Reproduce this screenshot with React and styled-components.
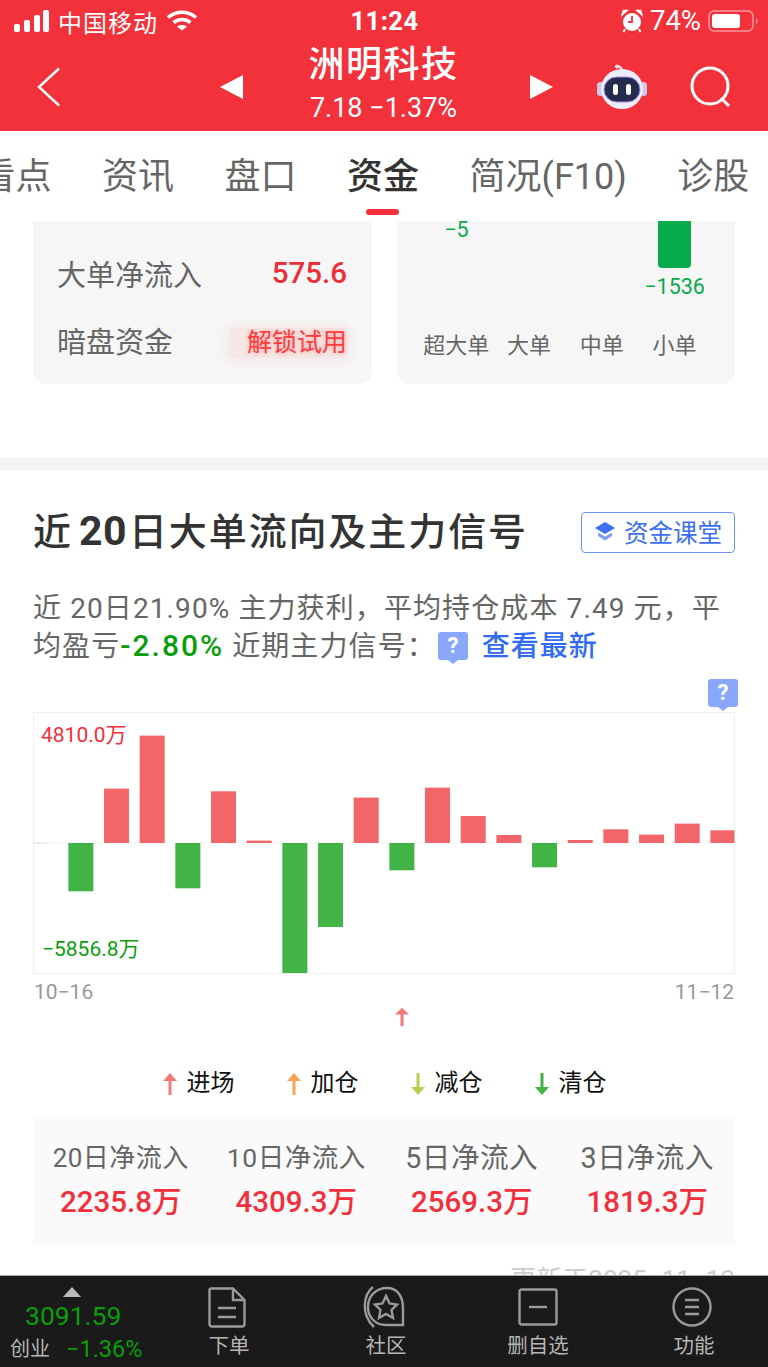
import React from "react";
import styled, { createGlobalStyle } from "styled-components";

const FONT = `Roboto, "Noto Sans CJK SC", sans-serif`;
const RED = "#f2303c";
const BAR_RED = "#f2666a";
const BAR_GREEN = "#42b445";

const Global = createGlobalStyle`
  html, body { margin: 0; padding: 0; background: #fff; }
  body { font-family: ${FONT}; }
  * { box-sizing: border-box; }
`;

const Page = styled.div`
  width: 768px;
  height: 1367px;
  display: flex;
  flex-direction: column;
  overflow: hidden;
  background: #fff;
`;

const Header = styled.header`
  height: 131px;
  background: #f2313a;
  color: #fff;
  flex: none;
`;

const StatusBar = styled.div`
  height: 42px;
  padding: 0 8px 0 14px;
  display: grid;
  grid-template-columns: 1fr auto 1fr;
  align-items: center;
  font-size: 24px;
`;

const StatusSide = styled.div`
  display: flex;
  align-items: center;
  gap: ${(p) => p.$gap || 8}px;
  justify-content: ${(p) => (p.$end ? "flex-end" : "flex-start")};
`;

const Carrier = styled.span`
  letter-spacing: 1px;
`;

const Clock = styled.span`
  margin-right: 5px;
  font-weight: 700;
  font-size: 25.5px;
  letter-spacing: 0.5px;
`;

const Battery = styled.span`
  font-size: 27.5px;
  line-height: 30px;
`;

const Nav = styled.div`
  height: 89px;
  display: grid;
  grid-template-columns: 183px 333px 1fr;
  align-items: center;
  padding: 0 36px 0 37px;
`;

const Stepper = styled.div`
  display: flex;
  align-items: center;
  justify-content: space-between;
`;

const Triangle = styled.i`
  width: 0;
  height: 0;
  border-top: 12px solid transparent;
  border-bottom: 12px solid transparent;
  border-left: ${(p) => (p.$right ? "23px solid #fff" : "0")};
  border-right: ${(p) => (p.$right ? "0" : "23px solid #fff")};
`;

const StockName = styled.div`
  display: flex;
  flex-direction: column;
  align-items: center;
  margin: -8px 6px 0 0;
`;

const StockTitle = styled.div`
  font-size: 36px;
  line-height: 46px;
  font-weight: 500;
  letter-spacing: 1.5px;
`;

const StockQuote = styled.div`
  margin-top: 4px;
  font-size: 27px;
  line-height: 32px;
  white-space: pre;
`;

const NavActions = styled.div`
  display: flex;
  justify-content: flex-end;
  align-items: center;
  gap: 42px;
`;

const Tabs = styled.nav`
  height: 90px;
  flex: none;
  display: flex;
  gap: 50.5px;
  padding-top: 25px;
  margin-left: -20.5px;
  white-space: nowrap;
`;

const Tab = styled.div`
  position: relative;
  font-size: 36px;
  line-height: 42px;
  color: ${(p) => (p.$active ? "#333" : "#666")};
  font-weight: ${(p) => (p.$active ? 500 : 400)};

  ${(p) =>
    p.$active &&
    `&::after {
      content: "";
      position: absolute;
      left: 19px;
      top: 53px;
      width: 33px;
      height: 6px;
      border-radius: 3px;
      background: #f2313a;
    }`}
`;

const Content = styled.main`
  flex: 1;
  min-height: 0;
  overflow: hidden;
`;

const CardRow = styled.div`
  margin-top: -40px;
  padding: 0 33px;
  display: grid;
  grid-template-columns: 339px 338px;
  gap: 25px;
`;

const Card = styled.div`
  height: 203px;
  background: #f6f6f6;
  border-radius: 14px;
`;

const FlowCard = styled(Card)`
  padding: 72px 25px 0 24px;
  display: flex;
  flex-direction: column;
  gap: 27px;
`;

const FlowRow = styled.div`
  display: flex;
  justify-content: space-between;
  align-items: center;
  height: 40px;
  font-size: 29px;
  color: #666;
`;

const FlowValue = styled.span`
  font-size: 29.5px;
  font-weight: 500;
  color: #ee2f3a;
`;

const LockedValue = styled.span`
  margin-top: 5px;
  font-size: 25px;
  line-height: 30px;
  padding-left: 17px;
  color: #ff3b3b;
  background: rgba(255, 70, 70, 0.08);
  box-shadow: 0 0 10px 3px rgba(255, 70, 70, 0.08);
  text-shadow: 0 0 5px rgba(255, 60, 60, 0.4);
`;

const BarCard = styled(Card)`
  padding: 0 24px 0 23px;
  display: grid;
  grid-template-columns: repeat(4, 1fr);
`;

const BarColumn = styled.div`
  display: flex;
  flex-direction: column;
  align-items: center;
`;

const BarPlot = styled.div`
  height: 150px;
  display: flex;
  flex-direction: column;
  align-items: center;
`;

const VolumeBar = styled.div`
  width: 33px;
  height: ${(p) => p.$height}px;
  background: ${(p) => (p.$ghost ? "transparent" : "#08ab4c")};
  border-radius: 0 0 4px 4px;
`;

const VolumeValue = styled.div`
  font-size: 21.5px;
  line-height: 38px;
  color: #08ab4c;
`;

const BarLabel = styled.div`
  font-size: 22px;
  line-height: 30px;
  color: #666;
  white-space: nowrap;
`;

const Divider = styled.div`
  height: 12px;
  margin-top: 74px;
  background: #f5f5f5;
`;

const Section = styled.section`
  padding: 42px 33px 0;
`;

const SectionHead = styled.div`
  display: flex;
  justify-content: space-between;
  align-items: center;
`;

const SectionTitle = styled.h2`
  margin: 0;
  padding-bottom: 2px;
  font-size: 38px;
  line-height: 38px;
  font-weight: 500;
  color: #333;
  letter-spacing: 1.9px;

  b {
    margin: 0 2px 0 6px;
    font-size: 41px;
    font-weight: 700;
    letter-spacing: 0.5px;
  }
`;

const ClassButton = styled.div`
  width: 154px;
  height: 41px;
  padding-bottom: 3px;
  border: 1.5px solid #6a91f4;
  border-radius: 4px;
  display: flex;
  align-items: center;
  justify-content: center;
  gap: 8px;
  font-size: 24.5px;
  color: #3d6ff0;
`;

const Summary = styled.p`
  margin: 38px 0 0;
  font-size: 28px;
  line-height: 36.5px;
  color: #666;
  letter-spacing: 1.1px;
  white-space: nowrap;
`;

const Loss = styled.span`
  font-size: 30px;
  font-weight: 500;
  letter-spacing: 2px;
  color: #0a9e0a;
`;

const Link = styled.span`
  color: #2f6bf5;
  font-weight: 500;
  margin-left: 14px;
  letter-spacing: 1px;
`;

const Badge = styled.span`
  position: relative;
  display: inline-flex;
  align-items: center;
  justify-content: center;
  width: 30px;
  height: 28px;
  margin-left: 2px;
  vertical-align: 3px;
  border-radius: 3px;
  background: #8aa8fb;
  color: #fff;
  font-size: 22px;
  line-height: 1;
  font-weight: 700;
  letter-spacing: 0;

  &::after {
    content: "";
    position: absolute;
    left: 50%;
    bottom: -4px;
    margin-left: -5px;
    border-left: 5px solid transparent;
    border-right: 5px solid transparent;
    border-top: 4px solid #8aa8fb;
  }
`;

const BadgeRow = styled.div`
  margin: 14px -3px 0 0;
  height: 33px;
  display: flex;
  justify-content: flex-end;

  ${Badge} {
    margin: 0;
  }
`;

const ChartBox = styled.div`
  position: relative;
  height: 262px;

  svg {
    display: block;
  }
`;

const ChartCaption = styled.span`
  position: absolute;
  left: ${(p) => p.$left}px;
  top: ${(p) => p.$top}px;
  font-size: 21px;
  line-height: 26px;
  color: ${(p) => p.$color};
`;

const DateRow = styled.div`
  display: flex;
  justify-content: space-between;
  margin-top: 6px;
  padding: 0 1px;
  font-size: 21px;
  line-height: 24px;
  color: #999;
`;

const SignalRow = styled.div`
  margin-top: 3px;
  height: 28px;
  padding-left: 361px;

  svg {
    display: block;
  }
`;

const Legend = styled.div`
  margin-top: 33px;
  height: 30px;
  display: flex;
  justify-content: center;
  gap: 51px;
`;

const LegendItem = styled.div`
  display: flex;
  align-items: center;
  gap: 9px;
  height: 30px;
  font-size: 24px;
  line-height: 24px;
  color: #111;

  svg {
    display: block;
    margin-top: 2px;
  }
`;

const StatsBox = styled.div`
  margin-top: 19px;
  height: 128px;
  background: #fafafa;
  display: grid;
  grid-template-columns: repeat(4, 1fr);
  padding-top: 23px;
`;

const Stat = styled.div`
  text-align: center;
`;

const StatLabel = styled.div`
  font-size: ${(p) => p.$size}px;
  line-height: 36px;
  color: #666;
  letter-spacing: 0.5px;
  white-space: nowrap;
`;

const StatValue = styled.div`
  margin-top: 7px;
  font-size: 29.5px;
  font-weight: 500;
  line-height: 38px;
  color: ${RED};
  white-space: nowrap;
`;

const UpdatedAt = styled.div`
  margin-top: 20px;
  text-align: right;
  font-size: 26px;
  line-height: 30px;
  color: #cccccc;
`;

const BottomBar = styled.footer`
  height: 92px;
  flex: none;
  background: #1a1a1a;
  border-top: 1px solid #aaa;
  display: grid;
  grid-template-columns: 150px 158px 156px 148px 156px;
  color: #b5b5b5;
`;

const Index = styled.div`
  padding: 11px 0 0 10px;
`;

const IndexArrow = styled.i`
  display: block;
  width: 0;
  margin-left: 53px;
  border-left: 9px solid transparent;
  border-right: 9px solid transparent;
  border-bottom: 10px solid #bbb;
`;

const IndexValue = styled.div`
  margin: 3px 0 2px 15px;
  font-size: 26.5px;
  line-height: 32px;
  color: #0a9e0a;
`;

const IndexFoot = styled.div`
  display: flex;
  align-items: center;
  gap: 16px;
  font-size: 20px;
  line-height: 30px;
`;

const IndexChange = styled.span`
  font-size: 23.5px;
  color: #0a9e0a;
`;

const BarItem = styled.div`
  display: flex;
  flex-direction: column;
  align-items: center;
  padding: 10px 0 0 ${(p) => p.$nudge || 0}px;
  font-size: 20.5px;
`;

const IconSlot = styled.div`
  height: 42px;
  display: flex;
  align-items: center;
  margin-right: ${(p) => p.$offset || 0}px;

  svg {
    display: block;
  }
`;

const BarText = styled.span`
  margin-top: 5px;
  line-height: 26px;
`;

const bars = [
  0, 48.3, -54.4, -107.4, 45.3, -51.7, -2.4, 130, 84, -45.4, 27.3, -55.4, -27, -8, 24.3, -3, -13.7, -8.4, -19.4, -12.7,
].map((v) => -v);

function DayChart() {
  return (
    <svg width="702" height="262" viewBox="0 0 702 262">
      <rect x="0.5" y="0.5" width="701" height="261" fill="#fff" stroke="#eee" />
      <line x1="0" x2="702" y1="131" y2="131" stroke="#f2f2f2" />
      <line x1="0" x2="16" y1="131" y2="131" stroke="#d5ecd5" />
      {bars.map((v, i) =>
        v === 0 ? null : (
          <rect
            key={i}
            x={35.67 * i - 0.33}
            y={v > 0 ? 131 - v : 131}
            width={i === 19 ? 24 : 25}
            height={Math.abs(v)}
            fill={v > 0 ? BAR_RED : BAR_GREEN}
          />
        )
      )}
    </svg>
  );
}

function SignalArrow({ color, down, height = 24 }) {
  return (
    <svg width="16" height={height} viewBox="0 0 16 24" style={{ transform: down ? "rotate(180deg)" : "none" }} preserveAspectRatio="none">
      <path d="M8 1 15 9H9.500V23H6.500V9H1Z" fill={color} />
    </svg>
  );
}

function SignalBars() {
  return (
    <svg width="36" height="24" viewBox="0 0 36 24" fill="#fff">
      <rect x="0" y="15" width="6" height="8" rx="2" />
      <rect x="10" y="11" width="6" height="12" rx="2" />
      <rect x="20" y="6" width="6" height="17" rx="2" />
      <rect x="29" y="1" width="6" height="22" rx="2" />
    </svg>
  );
}

function WifiIcon() {
  return (
    <svg width="32" height="24" viewBox="0 0 32 24" fill="none" stroke="#fff" strokeWidth="3.600">
      <path d="M2 8.500C10 1.500 22 1.500 30 8.500" />
      <path d="M7.500 13.500C12.500 9.500 19.500 9.500 24.500 13.500" />
      <path d="M16 21.500 11 17.500C14 15.500 18 15.500 21 17.500Z" fill="#fff" stroke="none" />
    </svg>
  );
}

function AlarmIcon() {
  return (
    <svg width="22" height="24" viewBox="0 0 22 24">
      <circle cx="11" cy="13" r="9" fill="#fff" />
      <path d="M1 6 6 1.500 2.500 1.500ZM21 6 16 1.500 19.500 1.500Z" fill="#fff" stroke="#fff" strokeWidth="1.500" />
      <path d="M11 7V13H7" fill="none" stroke="#f2313a" strokeWidth="1.800" />
      <path d="M4 20 2.500 23M18 20 19.500 23" stroke="#fff" strokeWidth="2" />
    </svg>
  );
}

function BatteryIcon() {
  return (
    <svg width="52" height="24" viewBox="0 0 52 24">
      <rect x="1" y="2" width="44" height="20" rx="5" fill="none" stroke="#fff" strokeOpacity="0.5" strokeWidth="1.500" />
      <rect x="4" y="5" width="28" height="14" rx="3" fill="#fff" />
      <path d="M48 9C50 10 50 14 48 15Z" fill="#fff" fillOpacity="0.5" />
    </svg>
  );
}

function BackIcon() {
  return (
    <svg width="24" height="40" viewBox="0 0 24 40" fill="none" stroke="#fff" strokeWidth="2.400">
      <path d="M22 1.500 2 20 22 38.500" />
    </svg>
  );
}

function RobotIcon() {
  return (
    <svg width="52" height="46" viewBox="0 0 52 46">
      <path d="M26 7C26 3 24 3 22 2" fill="none" stroke="#e6e0f5" strokeWidth="2" />
      <circle cx="21" cy="2.500" r="2" fill="#e6e0f5" />
      <rect x="1" y="18" width="7" height="14" rx="3.500" fill="#cfc8ec" />
      <rect x="44" y="18" width="7" height="14" rx="3.500" fill="#cfc8ec" />
      <ellipse cx="26" cy="25" rx="21" ry="20" fill="#eeeefb" />
      <rect x="8" y="13" width="36" height="25" rx="12.500" fill="#232c4c" stroke="#a78bf0" strokeWidth="1" />
      <rect x="17" y="20" width="5" height="11" rx="2.500" fill="#fff" />
      <rect x="30" y="20" width="5" height="11" rx="2.500" fill="#fff" />
    </svg>
  );
}

function SearchIcon() {
  return (
    <svg width="42" height="42" viewBox="0 0 42 42" fill="none" stroke="#fff" strokeWidth="3">
      <circle cx="20" cy="20" r="18" />
      <path d="M31 32 39 40" />
    </svg>
  );
}

function CapIcon() {
  return (
    <svg width="22" height="22" viewBox="0 0 22 22" fill="#3d6ff0">
      <path d="M11 2 21 8 11 14 1 8Z" />
      <path d="M4 12.500 11 16.500 18 12.500V16L11 20.500 4 16Z" fill="#7f9ff5" />
    </svg>
  );
}

const TAB_STROKE = { fill: "none", stroke: "#9a9a9a", strokeWidth: 2.4 };

function OrderIcon() {
  return (
    <svg width="38" height="41" viewBox="0 0 38 41" {...TAB_STROKE}>
      <path d="M3 1.500H25L36.500 13V37A2.500 2.500 0 0 1 34 39.500H4A2.500 2.500 0 0 1 1.500 37V3A1.500 1.500 0 0 1 3 1.500Z" />
      <path d="M25 1.500V13H36.500M10 21H28M10 30H28" />
    </svg>
  );
}

function CommunityIcon() {
  return (
    <svg width="44" height="42" viewBox="0 0 44 42" {...TAB_STROKE}>
      <path d="M12 1C3 8 -1 28 13 41" />
      <path d="M26 2C36 2 42 10 42 22V39H25C14 39 7 31 7 21 7 10 15 2 26 2Z" />
      <path d="M25 10 28.500 17.500 36 18.500 30.500 24 32 32 25 28 18 32 19.500 24 14 18.500 21.500 17.500Z" />
    </svg>
  );
}

function RemoveIcon() {
  return (
    <svg width="40" height="38" viewBox="0 0 40 38" {...TAB_STROKE}>
      <rect x="1.500" y="1.500" width="37" height="35" rx="2" />
      <path d="M11 19H29" />
    </svg>
  );
}

function MenuIcon() {
  return (
    <svg width="40" height="40" viewBox="0 0 40 40" {...TAB_STROKE}>
      <circle cx="20" cy="20" r="18.500" />
      <path d="M13 13H27M13 20H27M13 27H27" />
    </svg>
  );
}

const stats = [
  ["20日净流入", "2235.8万", 26],
  ["10日净流入", "4309.3万", 26.5],
  ["5日净流入", "2569.3万", 28.6],
  ["3日净流入", "1819.3万", 28.7],
];

const legend = [
  ["进场", "#f47a7a", false],
  ["加仓", "#f9a252", false],
  ["减仓", "#b5d24c", true],
  ["清仓", "#42b445", true],
];

export default function App() {
  return (
    <Page>
      <Global />
      <Header>
        <StatusBar>
          <StatusSide>
            <SignalBars />
            <Carrier>中国移动</Carrier>
            <WifiIcon />
          </StatusSide>
          <Clock>11:24</Clock>
          <StatusSide $end $gap={7}>
            <AlarmIcon />
            <Battery>74%</Battery>
            <BatteryIcon />
          </StatusSide>
        </StatusBar>
        <Nav>
          <BackIcon />
          <Stepper>
            <Triangle />
            <StockName>
              <StockTitle>洲明科技</StockTitle>
              <StockQuote>7.18 −1.37%</StockQuote>
            </StockName>
            <Triangle $right />
          </Stepper>
          <NavActions>
            <RobotIcon />
            <SearchIcon />
          </NavActions>
        </Nav>
      </Header>
      <Tabs>
        <Tab>看点</Tab>
        <Tab>资讯</Tab>
        <Tab>盘口</Tab>
        <Tab $active>资金</Tab>
        <Tab>简况(F10)</Tab>
        <Tab>诊股</Tab>
      </Tabs>
      <Content>
        <CardRow>
          <FlowCard>
            <FlowRow>
              大单净流入
              <FlowValue>575.6</FlowValue>
            </FlowRow>
            <FlowRow>
              暗盘资金
              <LockedValue>解锁试用</LockedValue>
            </FlowRow>
          </FlowCard>
          <BarCard>
            <BarColumn>
              <BarPlot>
                <VolumeBar $ghost $height={30} />
                <VolumeValue>−5</VolumeValue>
              </BarPlot>
              <BarLabel>超大单</BarLabel>
            </BarColumn>
            <BarColumn>
              <BarPlot />
              <BarLabel>大单</BarLabel>
            </BarColumn>
            <BarColumn>
              <BarPlot />
              <BarLabel>中单</BarLabel>
            </BarColumn>
            <BarColumn>
              <BarPlot>
                <VolumeBar $height={87} />
                <VolumeValue>−1536</VolumeValue>
              </BarPlot>
              <BarLabel>小单</BarLabel>
            </BarColumn>
          </BarCard>
        </CardRow>
        <Divider />
        <Section>
          <SectionHead>
            <SectionTitle>
              近<b>20</b>日大单流向及主力信号
            </SectionTitle>
            <ClassButton>
              <CapIcon />
              资金课堂
            </ClassButton>
          </SectionHead>
          <Summary>
            近 20日21.90% 主力获利{"\uFF0C"}平均持仓成本 7.49 元{"\uFF0C"}平
            <br />
            均盈亏<Loss>-2.80%</Loss> 近期主力信号{"\uFF1A"}
            <Badge>?</Badge>
            <Link>查看最新</Link>
          </Summary>
          <BadgeRow>
            <Badge>?</Badge>
          </BadgeRow>
          <ChartBox>
            <DayChart />
            <ChartCaption $left={8} $top={10} $color="#f2303c">
              4810.0万
            </ChartCaption>
            <ChartCaption $left={9} $top={224} $color="#0a9e0a">
              −5856.8万
            </ChartCaption>
          </ChartBox>
          <DateRow>
            <span>10−16</span>
            <span>11−12</span>
          </DateRow>
          <SignalRow>
            <SignalArrow color="#f47a7a" height={20} />
          </SignalRow>
          <Legend>
            {legend.map(([label, color, down]) => (
              <LegendItem key={label}>
                <SignalArrow color={color} down={down} />
                {label}
              </LegendItem>
            ))}
          </Legend>
          <StatsBox>
            {stats.map(([label, value, size]) => (
              <Stat key={label}>
                <StatLabel $size={size}>{label}</StatLabel>
                <StatValue>{value}</StatValue>
              </Stat>
            ))}
          </StatsBox>
          <UpdatedAt>更新于2025−11−12</UpdatedAt>
        </Section>
      </Content>
      <BottomBar>
        <Index>
          <IndexArrow />
          <IndexValue>3091.59</IndexValue>
          <IndexFoot>
            创业
            <IndexChange>−1.36%</IndexChange>
          </IndexFoot>
        </Index>
        <BarItem>
          <IconSlot $offset={5}>
            <OrderIcon />
          </IconSlot>
          <BarText>下单</BarText>
        </BarItem>
        <BarItem>
          <IconSlot $offset={6}>
            <CommunityIcon />
          </IconSlot>
          <BarText>社区</BarText>
        </BarItem>
        <BarItem>
          <IconSlot>
            <RemoveIcon />
          </IconSlot>
          <BarText>删自选</BarText>
        </BarItem>
        <BarItem $nudge={8}>
          <IconSlot $offset={5}>
            <MenuIcon />
          </IconSlot>
          <BarText>功能</BarText>
        </BarItem>
      </BottomBar>
    </Page>
  );
}
